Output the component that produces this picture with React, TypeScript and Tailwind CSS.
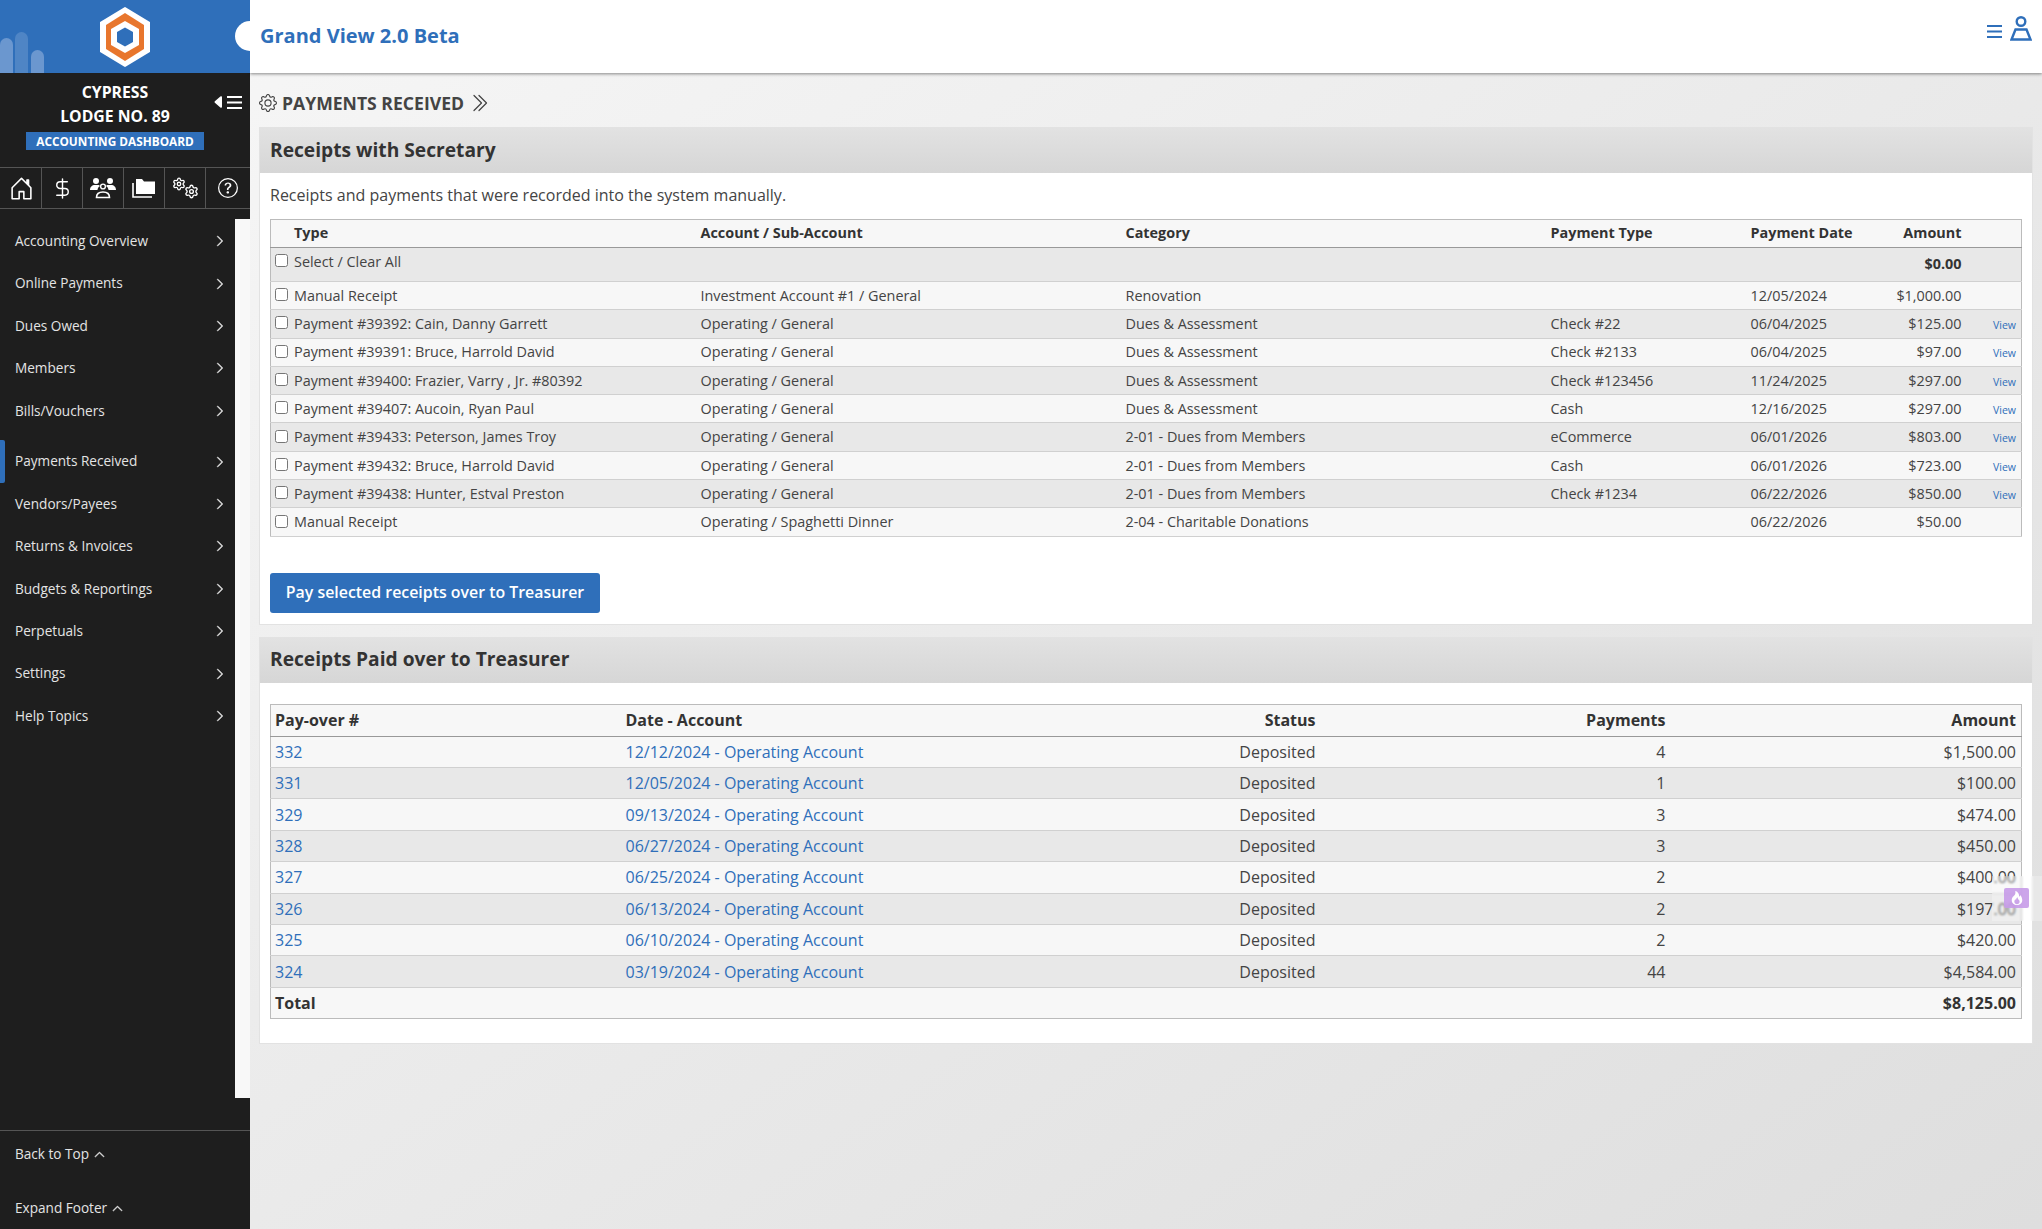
import React from 'react';
import {
  BsChevronDoubleRight,
  BsCaretLeftFill,
  BsChevronRight,
  BsChevronUp,
  BsFire,
  BsGear,
  BsHouseDoor,
  BsQuestionCircle,
} from 'react-icons/bs';
import { DollarSign, Settings } from 'lucide-react';

const menu = [
  'Accounting Overview',
  'Online Payments',
  'Dues Owed',
  'Members',
  'Bills/Vouchers',
  'Payments Received',
  'Vendors/Payees',
  'Returns & Invoices',
  'Budgets & Reportings',
  'Perpetuals',
  'Settings',
  'Help Topics',
];

const receipts = [
  ['Manual Receipt', 'Investment Account #1 / General', 'Renovation', '', '12/05/2024', '$1,000.00', false],
  ['Payment #39392: Cain, Danny Garrett', 'Operating / General', 'Dues & Assessment', 'Check #22', '06/04/2025', '$125.00', true],
  ['Payment #39391: Bruce, Harrold David', 'Operating / General', 'Dues & Assessment', 'Check #2133', '06/04/2025', '$97.00', true],
  ['Payment #39400: Frazier, Varry , Jr. #80392', 'Operating / General', 'Dues & Assessment', 'Check #123456', '11/24/2025', '$297.00', true],
  ['Payment #39407: Aucoin, Ryan Paul', 'Operating / General', 'Dues & Assessment', 'Cash', '12/16/2025', '$297.00', true],
  ['Payment #39433: Peterson, James Troy', 'Operating / General', '2-01 - Dues from Members', 'eCommerce', '06/01/2026', '$803.00', true],
  ['Payment #39432: Bruce, Harrold David', 'Operating / General', '2-01 - Dues from Members', 'Cash', '06/01/2026', '$723.00', true],
  ['Payment #39438: Hunter, Estval Preston', 'Operating / General', '2-01 - Dues from Members', 'Check #1234', '06/22/2026', '$850.00', true],
  ['Manual Receipt', 'Operating / Spaghetti Dinner', '2-04 - Charitable Donations', '', '06/22/2026', '$50.00', false],
] as const;

const payovers = [
  ['332', '12/12/2024 - Operating Account', '4', '$1,500.00'],
  ['331', '12/05/2024 - Operating Account', '1', '$100.00'],
  ['329', '09/13/2024 - Operating Account', '3', '$474.00'],
  ['328', '06/27/2024 - Operating Account', '3', '$450.00'],
  ['327', '06/25/2024 - Operating Account', '2', '$400.00'],
  ['326', '06/13/2024 - Operating Account', '2', '$197.00'],
  ['325', '06/10/2024 - Operating Account', '2', '$420.00'],
  ['324', '03/19/2024 - Operating Account', '44', '$4,584.00'],
];

const Logo = () => (
  <svg width="52" height="62" viewBox="0 0 52 62">
    <polygon points="26,2 50,16.500 50,45.500 26,60 2,45.500 2,16.500" fill="#ffffff" stroke="#ffffff" strokeWidth="2" strokeLinejoin="round" />
    <polygon points="26,7 45,19 45,43 26,55 7,43 7,19" fill="#e8762d" />
    <polygon points="26,15 40,23 40,39 26,47 12,39 12,23" fill="#ffffff" />
    <polygon points="26,21.500 34,26 34,36 26,40.500 18,36 18,26" fill="#2f6fba" />
  </svg>
);

const Burger = ({ color }: { color: string }) => (
  <svg width="15" height="13" viewBox="0 0 15 13" stroke={color} strokeWidth="2">
    <path d="M0 1h15M0 6.500h15M0 12h15" />
  </svg>
);

const PeopleIcon = () => (
  <svg width="26" height="22" viewBox="0 0 26 22" fill="#ffffff">
    <circle cx="6" cy="4" r="3" />
    <circle cx="20" cy="4" r="3" />
    <path d="M0 13c0-3 2-5 5-5h3c1 0 1.500 .5 2 1-1.500 1-2.500 2.500-2.500 4H0zM26 13c0-3-2-5-5-5h-3c-1 0-1.500 .5-2 1 1.500 1 2.500 2.500 2.500 4H26z" />
    <circle cx="13" cy="9.500" r="2.400" fill="none" stroke="#ffffff" strokeWidth="1.400" />
    <path d="M6.500 20.500c0-3.500 2.500-5.500 6.500-5.500s6.500 2 6.500 5.500z" fill="none" stroke="#ffffff" strokeWidth="1.600" />
  </svg>
);

const FoldersIcon = () => (
  <svg width="24" height="20" viewBox="0 0 24 20" fill="none">
    <path d="M1 5v14h19" stroke="#ffffff" strokeWidth="1.600" />
    <path d="M4 1h6l2 2.500h11V16H4z" fill="#ffffff" />
  </svg>
);

const UserIcon = () => (
  <svg width="22" height="25" viewBox="0 0 22 25" fill="none" stroke="#2f6fba" strokeWidth="2.400">
    <circle cx="11" cy="5.500" r="4.300" />
    <path d="M5.500 13.500h11L20.500 23.500H1.500z" />
  </svg>
);

const Sidebar = () => (
  <aside className="flex h-full w-[250px] shrink-0 flex-col bg-[#1e1e1e] text-white">
    <div className="relative flex h-[73px] shrink-0 items-center justify-center bg-[#2f6fba]">
      <div className="absolute bottom-0 left-0 h-[35px] w-[13px] rounded-t-lg bg-[#6b97cf]" />
      <div className="absolute bottom-0 left-[15px] h-[41px] w-[13px] rounded-t-lg bg-[#4f85c5]" />
      <div className="absolute bottom-0 left-[31px] h-[23px] w-[13px] rounded-t-lg bg-[#6b97cf]" />
      <Logo />
      <div className="absolute top-[21px] left-[235px] h-[30px] w-[15px] rounded-l-full bg-white" />
    </div>
    <div className="relative h-[94px] shrink-0 pt-[7px] text-center">
      <div className="w-[230px] text-[15.800px] leading-[24px] font-bold">CYPRESS</div>
      <div className="w-[230px] text-[15.800px] leading-[24px] font-bold">LODGE NO. 89</div>
      <div className="mt-[4px] ml-[26px] w-[178px] bg-[#2f6fba] text-[11.800px] leading-[18px] font-bold">
        ACCOUNTING DASHBOARD
      </div>
      <div className="absolute top-[21px] right-[8px] flex items-center">
        <BsCaretLeftFill size={16} />
        <Burger color="#ffffff" />
      </div>
    </div>
    <div className="flex h-[42px] shrink-0 border-y border-[#555555]">
      <div className="flex w-[42px] items-center justify-center border-r border-[#555555] pl-[2px]"><BsHouseDoor size={25} /></div>
      <div className="flex w-[41px] items-center justify-center border-r border-[#555555]"><DollarSign size={23} strokeWidth={1.500} /></div>
      <div className="flex w-[41px] items-center justify-center border-r border-[#555555]"><PeopleIcon /></div>
      <div className="flex w-[41px] items-center justify-center border-r border-[#555555]"><FoldersIcon /></div>
      <div className="relative flex w-[41px] items-center justify-center border-r border-[#555555]">
        <Settings size={14} strokeWidth={2.200} className="absolute top-[9px] left-[7px]" />
        <Settings size={15} strokeWidth={2.200} className="absolute top-[16px] left-[19px]" />
      </div>
      <div className="flex flex-1 items-center justify-center"><BsQuestionCircle size={20} /></div>
    </div>
    <div className="flex h-[921px] shrink-0">
      <nav className="flex-1 pt-[11px]">
        {menu.map((item) => {
          const active = item === 'Payments Received';
          return (
            <div
              key={item}
              className={`relative flex h-[42.400px] items-center justify-between pr-[9px] pl-[15px] text-[13.600px] text-[#e4e4e4] ${active ? 'mt-[8.500px]' : ''}`}
            >
              {active && <div className="absolute top-0 left-0 h-full w-[5px] rounded-r-[2px] bg-[#2f6fba]" />}
              <span>{item}</span>
              <BsChevronRight size={12} strokeWidth={1} />
            </div>
          );
        })}
      </nav>
      <div className="mt-[10px] h-[879px] w-[15px] bg-[#f8f8f8]" />
    </div>
    <div className="flex flex-1 flex-col border-t border-[#555555] text-[13.600px] text-[#e4e4e4]">
      <div className="flex h-[47px] items-center gap-[5px] pl-[15px]">
        Back to Top <BsChevronUp size={11} strokeWidth={1} />
      </div>
      <div className="flex h-[51px] items-center gap-[5px] pt-[10px] pl-[15px]">
        Expand Footer <BsChevronUp size={11} strokeWidth={1} />
      </div>
    </div>
  </aside>
);

const Panel = ({ title, children }: { title: string; children: React.ReactNode }) => (
  <section className="border border-[#e2e2e2] bg-white">
    <div className="flex h-[45px] items-center bg-gradient-to-b from-[#e2e2e2] to-[#d6d6d6] px-[10px] pb-[1px] text-[19.200px] font-bold text-[#333333]">
      {title}
    </div>
    {children}
  </section>
);

const ReceiptsTable = () => (
  <table className="w-full table-fixed border-collapse border border-[#bbbbbb] text-[14.400px] text-[#444444]">
    <colgroup>
      <col className="w-[425px]" />
      <col className="w-[425px]" />
      <col className="w-[425px]" />
      <col className="w-[200px]" />
      <col className="w-[145px]" />
      <col className="w-[76px]" />
      <col />
    </colgroup>
    <thead>
      <tr className="h-[28px] border-b border-[#999999] bg-[#f7f7f7] text-[#333333]">
        <th className="pb-[2px] pl-[23px] text-left font-bold">Type</th>
        <th className="pb-[2px] pl-[5px] text-left font-bold">Account / Sub-Account</th>
        <th className="pb-[2px] pl-[5px] text-left font-bold">Category</th>
        <th className="pb-[2px] pl-[5px] text-left font-bold">Payment Type</th>
        <th className="pb-[2px] pl-[5px] text-left font-bold">Payment Date</th>
        <th className="pr-[5px] pb-[2px] text-right font-bold">Amount</th>
        <th />
      </tr>
    </thead>
    <tbody>
      <tr className="h-[34px] border-b border-[#d0d0d0] bg-[#e8e8e8]">
        <td className="pb-[6px] pl-[4px]" colSpan={5}>
          <label className="flex items-center gap-[6px]">
            <input type="checkbox" className="h-[13px] w-[13px] -translate-y-[1px]" />
            Select / Clear All
          </label>
        </td>
        <td className="pr-[5px] pb-[2px] text-right font-bold text-[#333333]">$0.00</td>
        <td />
      </tr>
      {receipts.map((r, i) => (
        <tr key={i} className={`h-[28.300px] border-b border-[#d0d0d0] ${i % 2 === 0 ? 'bg-[#f7f7f7]' : 'bg-[#e8e8e8]'}`}>
          <td className="pl-[4px]">
            <label className="flex items-center gap-[6px] whitespace-nowrap">
              <input type="checkbox" className="h-[13px] w-[13px] -translate-y-[1px]" />
              {r[0]}
            </label>
          </td>
          <td className="pl-[5px]">{r[1]}</td>
          <td className="pl-[5px]">{r[2]}</td>
          <td className="pl-[5px]">{r[3]}</td>
          <td className="pl-[5px]">{r[4]}</td>
          <td className="pr-[5px] text-right">{r[5]}</td>
          <td className="pt-[4px] pr-[5px] text-right text-[10.500px] text-[#2f6fba]">{r[6] ? 'View' : ''}</td>
        </tr>
      ))}
    </tbody>
  </table>
);

const PayoverTable = () => (
  <table className="w-full table-fixed border-collapse border border-[#bbbbbb] text-[16px] text-[#444444]">
    <colgroup>
      <col className="w-[350px]" />
      <col className="w-[400px]" />
      <col className="w-[300px]" />
      <col className="w-[350px]" />
      <col />
    </colgroup>
    <thead>
      <tr className="h-[32px] border-b border-[#999999] bg-[#f7f7f7] text-[#333333]">
        <th className="pl-[4px] text-left font-bold">Pay-over #</th>
        <th className="pl-[5px] text-left font-bold">Date - Account</th>
        <th className="pr-[5px] text-right font-bold">Status</th>
        <th className="pr-[5px] text-right font-bold">Payments</th>
        <th className="pr-[5px] text-right font-bold">Amount</th>
      </tr>
    </thead>
    <tbody>
      {payovers.map((p, i) => (
        <tr key={p[0]} className={`h-[31.400px] border-b border-[#d0d0d0] ${i % 2 === 0 ? 'bg-[#f7f7f7]' : 'bg-[#e8e8e8]'}`}>
          <td className="pl-[4px] text-[#2f6fba]">{p[0]}</td>
          <td className="pl-[5px] text-[#2f6fba]">{p[1]}</td>
          <td className="pr-[5px] text-right">Deposited</td>
          <td className="pr-[5px] text-right">{p[2]}</td>
          <td className="pr-[5px] text-right">{p[3]}</td>
        </tr>
      ))}
      <tr className="h-[31.400px] bg-[#f7f7f7] font-bold text-[#333333]">
        <td className="pl-[4px]" colSpan={4}>Total</td>
        <td className="pr-[5px] text-right">$8,125.00</td>
      </tr>
    </tbody>
  </table>
);

export default function App() {
  return (
    <div className="relative flex h-screen w-screen overflow-hidden bg-[#1e1e1e] font-['Open_Sans',sans-serif]">
      <Sidebar />
      <main className="flex h-full flex-1 flex-col bg-gradient-to-br from-[#f6f6f6] to-[#dedede]">
        <header className="flex h-[73px] items-center justify-between bg-white pr-[10px] pl-[10px] shadow-[0_1px_3px_rgba(0,0,0,0.45)]">
          <span className="pb-[2px] text-[20px] font-bold text-[#2f6fba]">Grand View 2.0 Beta</span>
          <div className="flex items-center gap-[8px] pb-[17px]">
            <div className="mt-[6px] flex"><Burger color="#2f6fba" /></div>
            <UserIcon />
          </div>
        </header>
        <div className="flex items-center gap-[5px] pt-[18px] pl-[9px] text-[#444444]">
          <BsGear size={18} />
          <span className="text-[17.600px] leading-[24px] font-bold">PAYMENTS RECEIVED</span>
          <BsChevronDoubleRight size={20} />
        </div>
        <div className="mt-[12px] flex flex-col gap-[12px] pr-[9px] pl-[9px]">
          <Panel title="Receipts with Secretary">
            <div className="px-[10px] pb-[11px]">
              <p className="flex h-[46px] items-center pb-[2px] text-[16px] text-[#444444]">
                Receipts and payments that were recorded into the system manually.
              </p>
              <ReceiptsTable />
              <button className="mt-[36px] h-[40px] w-[330px] rounded-[3px] bg-[#2f6fba] text-[15.900px] font-semibold text-white">
                Pay selected receipts over to Treasurer
              </button>
            </div>
          </Panel>
          <Panel title="Receipts Paid over to Treasurer">
            <div className="px-[10px] pt-[21px] pb-[24px]">
              <PayoverTable />
            </div>
          </Panel>
        </div>
      </main>
      <div className="absolute top-[876px] left-[1992px] flex h-[45px] w-[50px] items-start justify-end bg-white/25 pt-[12px] pr-[13px] backdrop-blur-[1px]">
        <div className="flex h-[20px] w-[25px] items-center justify-center rounded-[2px] bg-[#c79be8]/90 text-white">
          <BsFire size={14} />
        </div>
      </div>
    </div>
  );
}
